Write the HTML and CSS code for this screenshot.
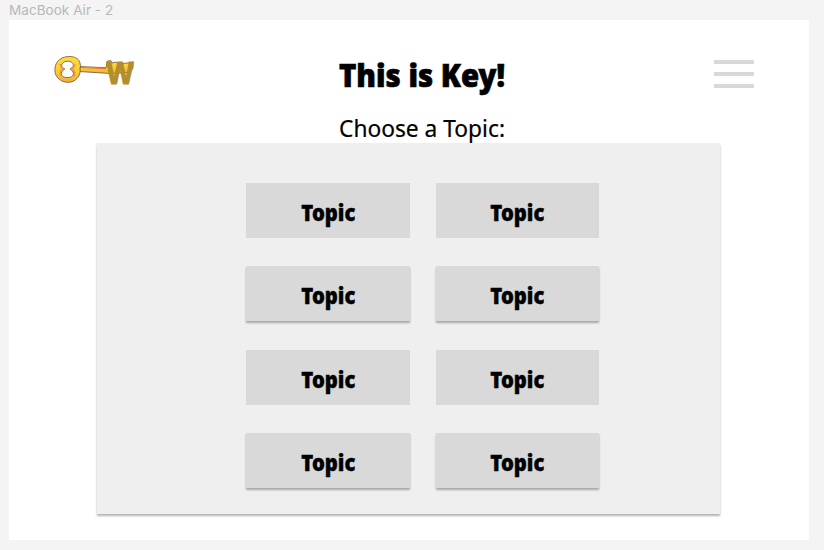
FILE: index.html
```html
<!DOCTYPE html>
<html lang="en">
<head>
<meta charset="utf-8">
<title>This is Key!</title>
<link rel="stylesheet" href="styles.css">
</head>
<body>
<div class="frame-label">MacBook Air - 2</div>
<main class="frame">
  <header class="header">
    <svg class="logo" viewBox="0 0 82 32" role="img" aria-label="Key W">
      <defs><linearGradient id="gold" x1="0" y1="0" x2="0" y2="1"><stop offset="0" stop-color="#ffdc3c"/><stop offset=".6" stop-color="#fdcb36"/><stop offset="1" stop-color="#f3ad35"/></linearGradient></defs>
      <path d="M25 11.5 52 12.7 53.5 6 57 5.6 58 8 62 7 64 9 79 7.5 79 13 76 17.5 57 18.5 25 16.5Z" fill="url(#gold)" stroke="#68563a" stroke-width=".8"/>
      <path d="M26 12.5 52 13.7" stroke="#e87a38" stroke-width="1.2"/>
      <path fill-rule="evenodd" d="M14 1.6C19 1 25 3 26 8Q27 11 26 14C27 20 23 25 18 26.7C11 29 3 25 1.2 18C-.6 9 5 2 14 1.6ZM13.5 6.3C9.500 6 6.500 9.500 8 12Q9 13 10.800 14Q9 15 7.700 17C6 20 9 22.800 13.500 22.500C18 22.800 20.500 20 19 17Q18 15 16 14Q18 13 19 11.500C20 8.500 17.500 6 13.500 6.300Z" fill="url(#gold)" stroke="#68563a" stroke-width=".8"/>
      <path d="M6 9Q7 12 8.500 13.500Q5 17 6.500 20.500M21 9Q21 12 18.500 13.500Q22 17 20 21.500" fill="none" stroke="#ef9136" stroke-width="1.2"/>
      <text class="logo-letter" x="52.5" y="29" textLength="27" lengthAdjust="spacingAndGlyphs">W</text>
    </svg>
    <div class="headings">
      <h1><svg class="title" viewBox="0 0 170 44"><text x="1" y="32" textLength="166" lengthAdjust="spacingAndGlyphs">This is Key!</text></svg></h1>
      <h2><svg class="subtitle" viewBox="0 0 170 32"><text x="1" y="25.6" textLength="166" lengthAdjust="spacingAndGlyphs">Choose a Topic:</text></svg></h2>
    </div>
    <div class="menu"><span></span><span></span><span></span></div>
  </header>
  <section class="panel">
    <div class="topic"><span>Topic</span></div>
    <div class="topic"><span>Topic</span></div>
    <div class="topic raised"><span>Topic</span></div>
    <div class="topic raised"><span>Topic</span></div>
    <div class="topic"><span>Topic</span></div>
    <div class="topic"><span>Topic</span></div>
    <div class="topic raised"><span>Topic</span></div>
    <div class="topic raised"><span>Topic</span></div>
  </section>
</main>
</body>
</html>
```
FILE: styles.css
```css
* { box-sizing: border-box; }
body { margin: 0; height: 550px; overflow: hidden; background: #f4f4f4; font-family: "Noto Sans", sans-serif; color: #000; }
.frame-label { height: 20px; padding-left: 9px; font: 13.6px/21px Inter, sans-serif; color: #b8b8b8; }
.frame { width: 800px; height: 520px; margin-left: 9px; background: #fff; }
.header { display: flex; height: 123px; padding-left: 45px; }
.logo { width: 82px; height: 32px; margin-top: 35px; overflow: visible; }
.logo-letter { font: 800 32px "Liberation Sans", sans-serif; fill: #b18e2b; stroke: #b18e2b; stroke-width: 1.2px; }
.headings { width: 170px; margin: 35px 0 0 202px; }
h1, h2 { margin: 0; line-height: 0; font-size: inherit; }
.title { display: block; width: 170px; height: 44px; overflow: visible; }
.title text { font: 900 32px "Noto Sans", sans-serif; stroke: #000; stroke-width: .7px; }
.subtitle { display: block; width: 170px; height: 32px; margin-top: 12px; overflow: visible; }
.subtitle text { font: 400 23px "Noto Sans", sans-serif; stroke: #000; stroke-width: .2px; }
.menu { display: flex; flex-direction: column; gap: 8px; width: 40px; margin: 40px 0 0 206px; }
.menu span { height: 4px; background: #d9d9d9; }
.panel { display: grid; grid-template-columns: 163.5px 163.5px; grid-auto-rows: 55px; gap: 28.2px 25.8px; width: 623px; height: 371px; margin-left: 88px; padding: 40.3px 0 0 149.3px; background: #efefef; box-shadow: 0 2px 2px rgba(0,0,0,.3); }
.topic { display: flex; align-items: center; justify-content: center; padding-top: 3px; background: #d9d9d9; }
.topic span { font: 900 22px/30px "Noto Sans", sans-serif; transform: scaleX(.92); -webkit-text-stroke: .4px #000; }
.raised { box-shadow: 0 2px 2px rgba(0,0,0,.3); }
```
